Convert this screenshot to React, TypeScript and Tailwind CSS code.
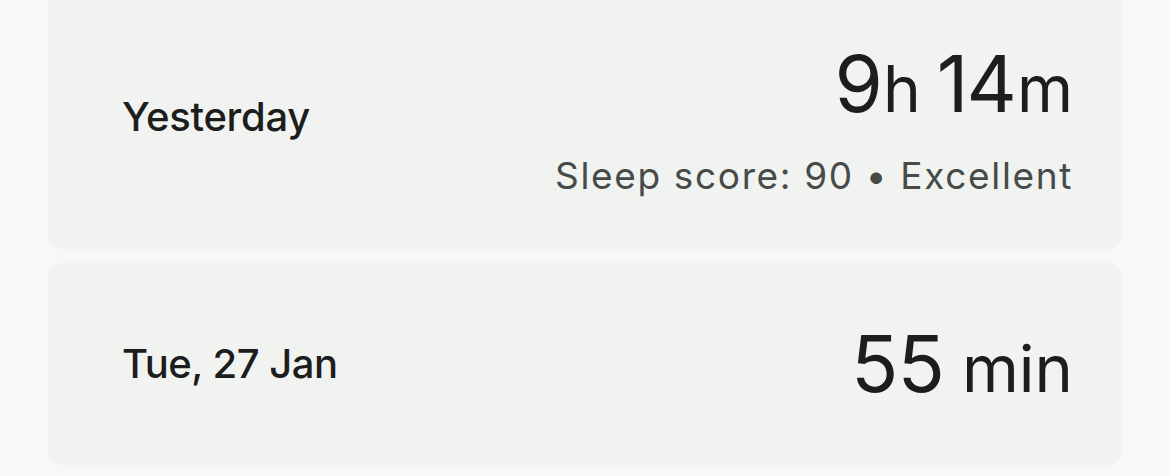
import React from 'react';

const font = { fontFamily: 'Inter, "Open Sans", sans-serif' };

export default function App() {
  return (
    <div className="w-[1169px] h-[476px] overflow-hidden bg-[#f7f9f7]" style={font}>
      <div className="flex flex-col gap-[14px] pl-[48px] pr-[47px] -mt-[15px]">
        {/* Yesterday */}
        <div className="flex items-center justify-between h-[264px] rounded-[14px] bg-[#f1f3f1] pl-[74px] pr-[49px]">
          <span className="text-[40px] font-medium tracking-[-0.3px] text-[#1c1d1c]">Yesterday</span>
          <div className="flex flex-col items-end pt-[14px]">
            <div className="flex items-baseline text-[#1c1d1c] leading-none">
              <span className="text-[78px] tracking-[-2px]">9</span>
              <span className="text-[64px] ml-[2px]">h</span>
              <span className="text-[78px] tracking-[-2px] ml-[16px]">14</span>
              <span className="text-[64px] ml-[2px]">m</span>
            </div>
            <span className="mt-[25px] text-[37px] text-[#464b48] tracking-[1.65px]">Sleep score: 90 • Excellent</span>
          </div>
        </div>
        {/* Tue */}
        <div className="flex items-center justify-between h-[202px] rounded-[14px] bg-[#f1f3f1] pl-[74px] pr-[49px]">
          <span className="text-[40px] font-medium tracking-[-0.5px] text-[#1c1d1c]">Tue, 27 Jan</span>
          <div className="flex items-baseline text-[#1c1d1c] leading-none">
            <span className="text-[78px] tracking-[-1px]">55</span>
            <span className="text-[65px] ml-[18px]">min</span>
          </div>
        </div>
      </div>
    </div>
  );
}
